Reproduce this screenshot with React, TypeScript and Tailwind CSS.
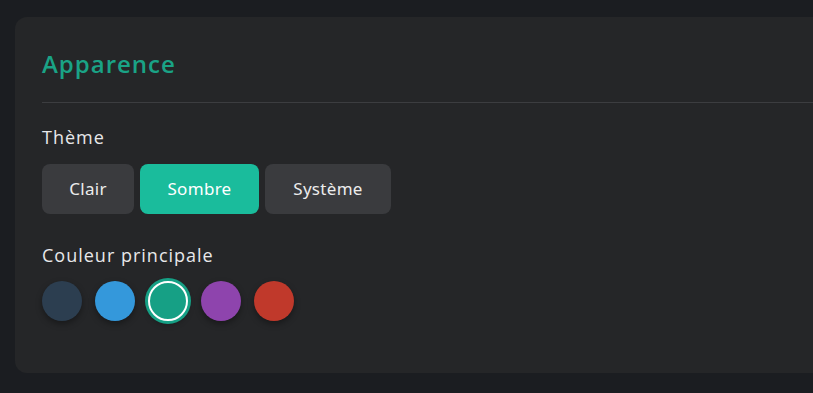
import React from "react";

const colors = ["#2c3e50", "#3498db", "#16a085", "#8e44ad", "#c0392b"];

export default function App() {
  return (
    <div className="w-[813px] h-[393px] overflow-hidden bg-[#1b1d21] pl-[15px] pt-[17px]">
      <div className="w-[830px] h-[356px] rounded-[12px] bg-[#252628] pl-[27px] pt-[30px] font-['Open_Sans',sans-serif]">
        <h2 className="text-[24px] font-semibold leading-[34px] text-[#1aa386] tracking-[1px]">Apparence</h2>
        <div className="mt-[21px] h-px bg-[#3c3d40]" />
        <div className="mt-[22px] text-[18px] leading-[24px] tracking-[1px] text-[#e8e8ea]">Thème</div>
        <div className="mt-[15px] flex gap-[6px] font-['Noto_Sans',sans-serif] text-[17px] tracking-[0.3px] text-[#ececec]">
          <button className="h-[50px] w-[92px] rounded-[8px] bg-[#3a3b3e]">Clair</button>
          <button className="h-[50px] w-[119px] rounded-[8px] bg-[#1abc9c] text-white">Sombre</button>
          <button className="h-[50px] w-[126px] rounded-[8px] bg-[#3a3b3e]">Système</button>
        </div>
        <div className="mt-[29px] text-[18px] leading-[24px] tracking-[1px] text-[#e8e8ea]">Couleur principale</div>
        <div className="mt-[14px] flex gap-[13px]">
          {colors.map((c, i) => (
            <div
              key={c}
              className={
                i === 2
                  ? "h-[40px] w-[40px] rounded-full border-2 border-white ring-[3px] ring-[#16a085] shadow-[0_3px_6px_rgba(0,0,0,0.35)]"
                  : "h-[40px] w-[40px] rounded-full shadow-[0_3px_6px_rgba(0,0,0,0.35)]"
              }
              style={{ backgroundColor: c }}
            />
          ))}
        </div>
      </div>
    </div>
  );
}
